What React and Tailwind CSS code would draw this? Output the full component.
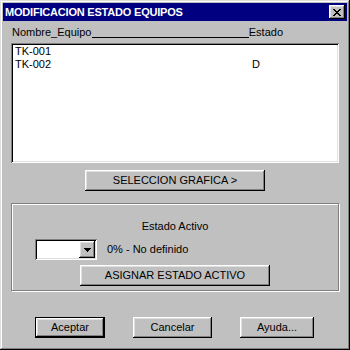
import React from 'react';

const raised =
  'bg-[#c0c0c0] shadow-[inset_-1px_-1px_#000,inset_1px_1px_#fff,inset_-2px_-2px_#808080,inset_2px_2px_#dfdfdf]';
const sunken =
  'bg-white shadow-[inset_1px_1px_#808080,inset_-1px_-1px_#fff,inset_2px_2px_#000,inset_-2px_-2px_#dfdfdf]';

const equipos = [
  { nombre: 'TK-001', estado: '' },
  { nombre: 'TK-002', estado: 'D' },
];

function Button({ children, className = '', isDefault = false }) {
  if (isDefault) {
    return (
      <div className={`border border-black ${className}`}>
        <div className={`${raised} w-full h-full flex items-center justify-center`}>{children}</div>
      </div>
    );
  }
  return <div className={`${raised} flex items-center justify-center ${className}`}>{children}</div>;
}

function CloseIcon() {
  const rows = [
    [0, 1, 6, 7],
    [1, 2, 5, 6],
    [2, 3, 4, 5],
    [3, 4],
    [2, 3, 4, 5],
    [1, 2, 5, 6],
    [0, 1, 6, 7],
  ];
  return (
    <svg width="8" height="7" viewBox="0 0 8 7" shapeRendering="crispEdges">
      {rows.map((cols, y) =>
        cols.map((x) => <rect key={`${x}-${y}`} x={x} y={y} width="1" height="1" fill="#000" />)
      )}
    </svg>
  );
}

function ArrowDown() {
  return (
    <svg width="7" height="4" viewBox="0 0 7 4" shapeRendering="crispEdges">
      <rect x="0" y="0" width="7" height="1" fill="#000" />
      <rect x="1" y="1" width="5" height="1" fill="#000" />
      <rect x="2" y="2" width="3" height="1" fill="#000" />
      <rect x="3" y="3" width="1" height="1" fill="#000" />
    </svg>
  );
}

export default function App() {
  return (
    <div
      className="w-[350px] h-[350px] bg-[#c0c0c0] flex flex-col text-[11px] leading-[13px] text-black shadow-[inset_-1px_-1px_#000,inset_1px_1px_#dfdfdf,inset_-2px_-2px_#808080,inset_2px_2px_#fff] overflow-hidden"
      style={{ fontFamily: '"Liberation Sans", Arial, sans-serif' }}
    >
      {/* barra de titulo */}
      <div className="mx-[3px] mt-[3px] h-[18px] bg-[#000080] flex items-center justify-between pl-[2px] pr-[2px]">
        <span className="text-white font-bold text-[11px] tracking-[-0.2px]">MODIFICACION ESTADO EQUIPOS</span>
        <div className={`${raised} w-[16px] h-[14px] flex items-center justify-center`}>
          <CloseIcon />
        </div>
      </div>

      {/* cabecera de la lista */}
      <div className="mt-[5px] ml-[12px] w-[271px] h-[13px] flex items-end">
        <span>Nombre_Equipo</span>
        <span className="flex-1 border-b border-black mb-[1px]" />
        <span>Estado</span>
      </div>

      {/* lista */}
      <div className={`${sunken} mt-[4px] ml-[11px] w-[328px] h-[120px] p-[2px] pl-[4px]`}>
        {equipos.map((e) => (
          <div key={e.nombre} className="flex h-[13px]">
            <span className="w-[237px]">{e.nombre}</span>
            <span>{e.estado}</span>
          </div>
        ))}
      </div>

      <Button className="mt-[7px] mx-auto w-[180px] h-[21px]">SELECCION GRAFICA &gt;</Button>

      {/* grupo estado activo */}
      <div className="mt-[12px] ml-[11px] w-[328px] h-[88px] border border-[#808080] shadow-[inset_1px_1px_#fff,1px_1px_#fff] flex flex-col">
        <div className="mt-[16px] text-center h-[13px]">Estado Activo</div>
        <div className="mt-[6px] flex items-center">
          <div className={`${sunken} ml-[23px] w-[62px] h-[21px] flex justify-end p-[2px]`}>
            <div className={`${raised} w-[16px] h-[17px] flex items-center justify-center`}>
              <ArrowDown />
            </div>
          </div>
          <span className="ml-[10px]">0% - No definido</span>
        </div>
        <Button className="mt-[5px] mx-auto w-[190px] h-[21px]">ASIGNAR ESTADO ACTIVO</Button>
      </div>

      {/* botones */}
      <div className="mt-[26px] ml-[35px] flex gap-[28px]">
        <Button isDefault className="w-[70px] h-[21px]">Aceptar</Button>
        <Button className="w-[79px] h-[21px]">Cancelar</Button>
        <Button className="w-[74px] h-[21px]">Ayuda...</Button>
      </div>
    </div>
  );
}
